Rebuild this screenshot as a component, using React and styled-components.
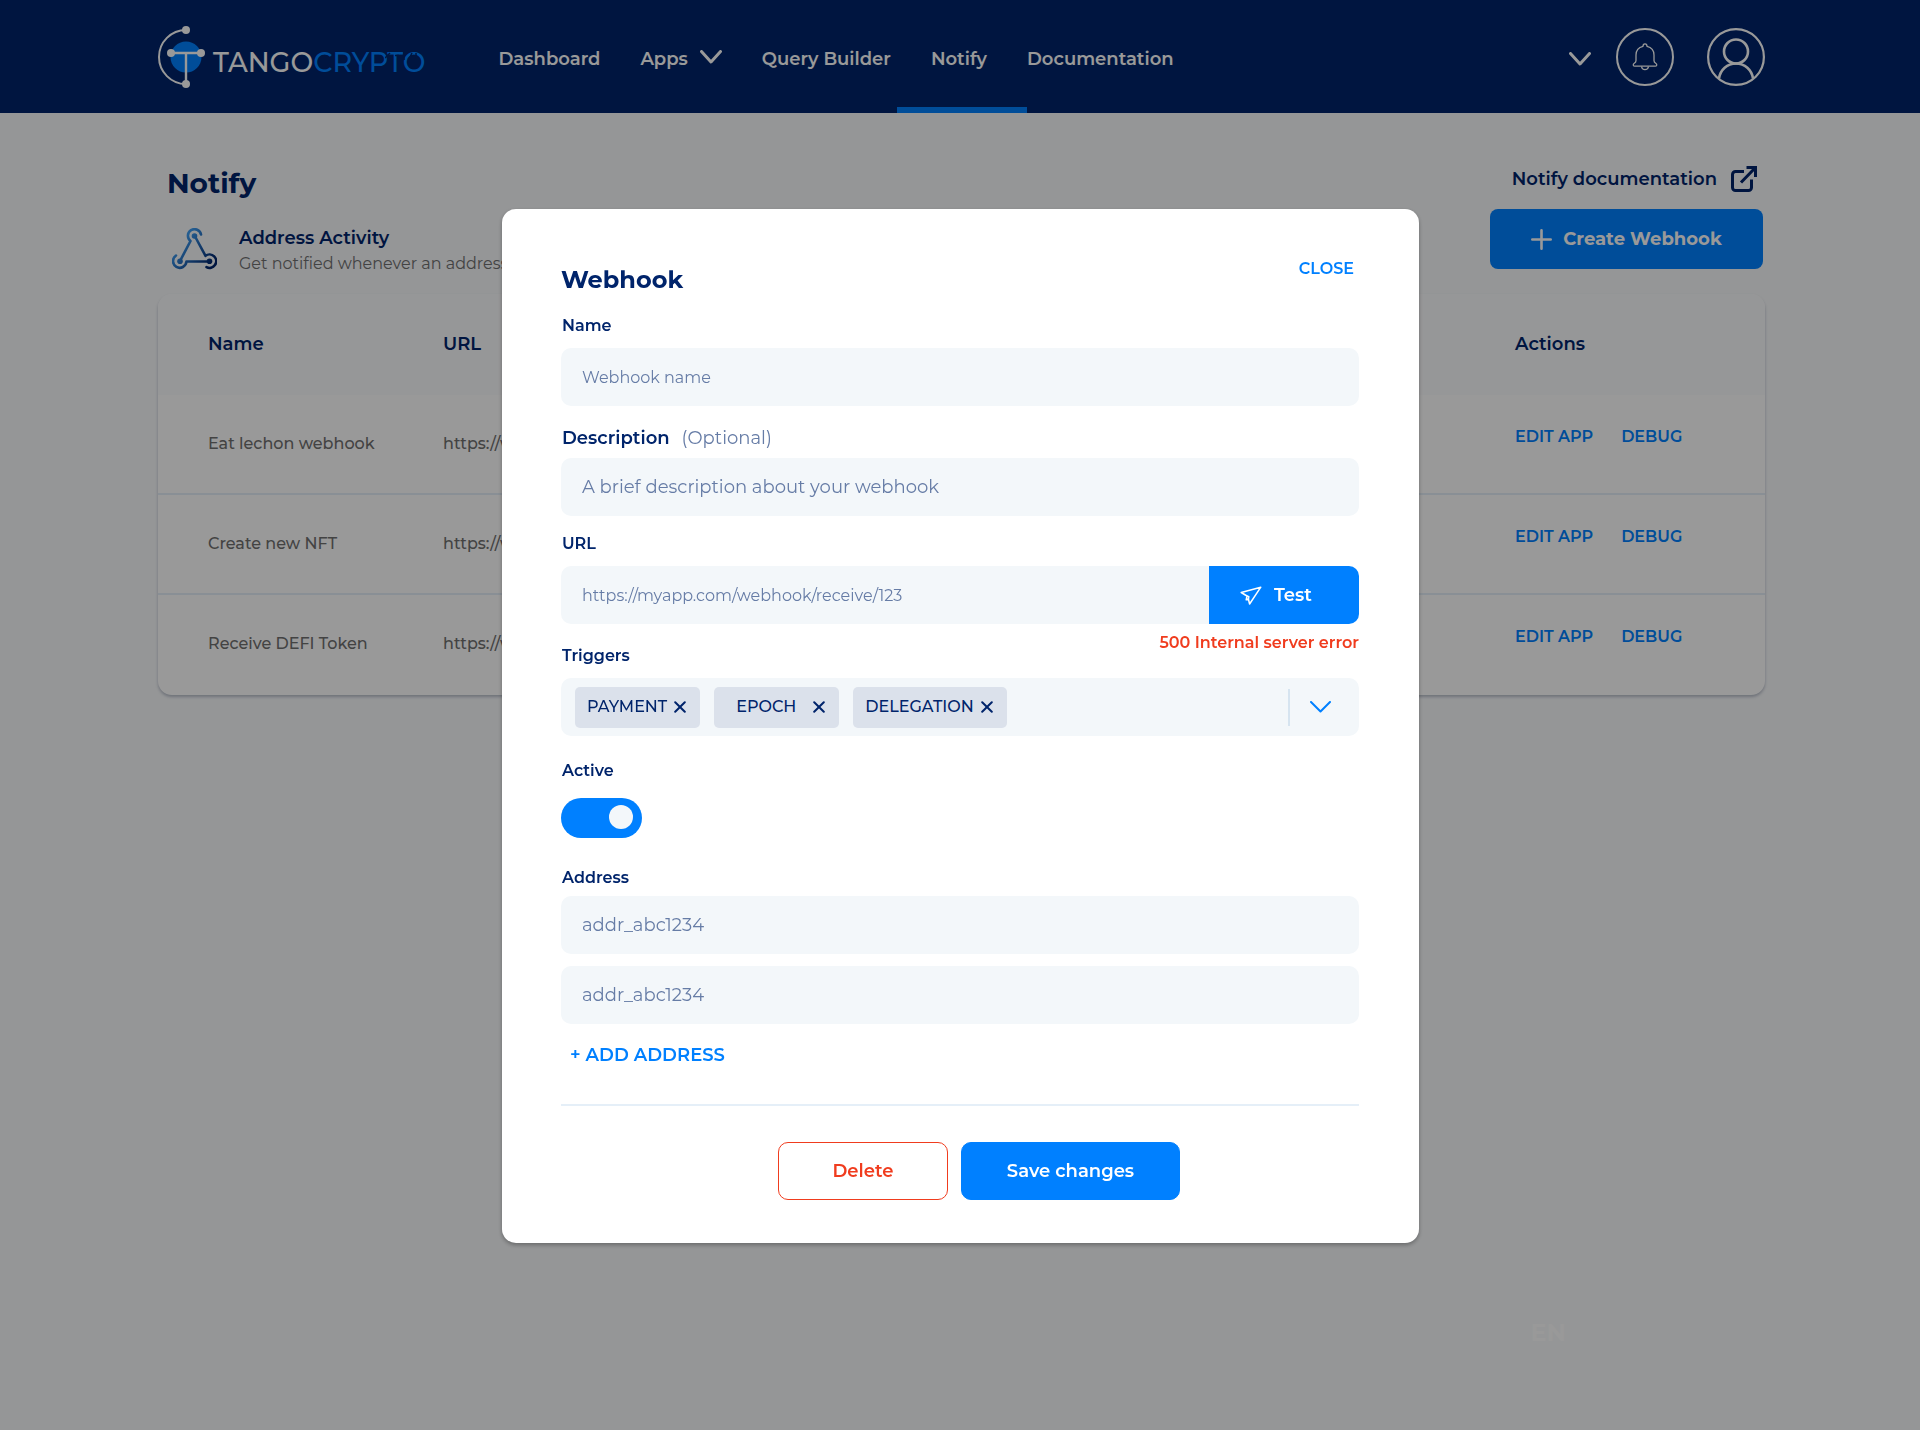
import React from "react";
import styled, { createGlobalStyle } from "styled-components";

const color = {
  navy: "#00246b",
  blue: "#0080ff",
  red: "#f03c1e",
  white: "#ffffff",
  page: "#f8fafc",
  tint: "#f3f7fa",
  muted: "#667ca6",
  body: "#707070",
  line: "#e5eff8",
  chip: "#dbe1eb",
};

const GlobalStyle = createGlobalStyle`
  *, *::before, *::after { box-sizing: border-box; }
  body {
    margin: 0;
    background: ${color.page};
    color: ${color.navy};
    font-family: Montserrat, Inter, sans-serif;
    font-size: 16px;
    line-height: 24px;
  }
  button, input { font: inherit; color: inherit; margin: 0; }
  button { border: 0; padding: 0; background: none; cursor: pointer; }
  a { color: inherit; text-decoration: none; }
  h1, h2, p { margin: 0; }
  svg { display: block; flex: none; }
`;

/* ---------- Page ---------- */

const Page = styled.div`
  min-height: 100vh;
  display: flex;
  flex-direction: column;
`;

const Header = styled.header`
  display: flex;
  align-items: center;
  height: 113px;
  padding: 0 155px 0 158px;
  background: ${color.navy};
  color: ${color.white};
`;

const Logo = styled.a`
  display: flex;
  align-items: center;
  gap: 7px;
  margin-right: 73px;
`;

const LogoText = styled.span`
  position: relative;
  padding-top: 12px;
  font-size: 27px;
  line-height: 32px;
  font-weight: 500;
`;

const LogoAccent = styled.span`
  color: ${color.blue};
`;

const LogoCuts = styled.svg`
  position: absolute;
  top: 17px;
  right: 4px;
`;

const Nav = styled.nav`
  display: flex;
  align-self: stretch;
  align-items: stretch;
  gap: 40px;
`;

const NavLink = styled.a`
  position: relative;
  display: flex;
  align-items: center;
  gap: 12px;
  padding-top: 4px;
  font-size: 18px;
  font-weight: 600;

  svg { margin-bottom: 4px; }

  &[aria-current]::after {
    content: "";
    position: absolute;
    left: -34px;
    right: -40px;
    bottom: 0;
    height: 6px;
    background: ${color.blue};
  }
`;

const HeaderTools = styled.div`
  display: flex;
  align-items: center;
  gap: 33px;
  margin-left: auto;
`;

const ToolGroup = styled.div`
  display: flex;
  align-items: center;
  gap: 25px;
`;

const MoreButton = styled.button`
  padding-top: 5px;
`;

const Main = styled.main`
  flex: 1;
  display: flex;
  flex-direction: column;
  padding: 52px 155px 0 158px;
`;

const Intro = styled.section`
  display: flex;
  justify-content: space-between;
  padding: 0 2px 17px 9px;
`;

const PageTitle = styled.h1`
  font-size: 28px;
  line-height: 36px;
  font-weight: 700;
`;

const Activity = styled.div`
  display: flex;
  align-items: center;
  gap: 22px;
  margin-top: 24px;
  padding-left: 5px;
`;

const ActivityTitle = styled.p`
  font-size: 18px;
  line-height: 26px;
  font-weight: 600;
`;

const ActivityText = styled.p`
  line-height: 26px;
  font-weight: 400;
  color: ${color.body};
`;

const IntroActions = styled.div`
  display: flex;
  flex-direction: column;
  align-items: flex-end;
  gap: 17px;
  padding-top: 1px;
`;

const DocLink = styled.a`
  display: flex;
  align-items: center;
  gap: 14px;
  margin-right: 6px;
  font-size: 18px;
  line-height: 26px;
  font-weight: 600;
`;

const CreateButton = styled.button`
  display: flex;
  align-items: center;
  justify-content: center;
  gap: 11px;
  width: 273px;
  height: 60px;
  border-radius: 8px;
  background: ${color.blue};
  color: ${color.white};
  font-size: 18px;
  font-weight: 700;
`;

const Card = styled.div`
  border-radius: 14px;
  overflow: hidden;
  background: ${color.white};
  box-shadow: 0 2px 3px rgba(0, 20, 60, 0.25);
`;

const Table = styled.table`
  width: 100%;
  border-collapse: separate;
  border-spacing: 0;
  table-layout: fixed;
`;

const HeadCell = styled.th`
  width: ${(p) => p.$width || "auto"};
  height: 101px;
  padding: 0 0 2px ${(p) => (p.$first ? "50px" : "0")};
  background: #fbfcfe;
  font-size: 18px;
  font-weight: 600;
  text-align: left;
`;

const Row = styled.tr`
  &:not(:last-child) td { border-bottom: 2px solid ${color.line}; }
`;

const Cell = styled.td`
  height: 100px;
  padding: 37px 0 0 ${(p) => (p.$first ? "50px" : "0")};
  vertical-align: top;
  white-space: nowrap;
  overflow: hidden;
  font-weight: 500;
  color: ${color.body};
`;

const ActionCell = styled(Cell)`
  padding-top: 30px;
`;

const RowActions = styled.div`
  display: flex;
  gap: 28px;
`;

const TextButton = styled.button`
  color: ${color.blue};
  font-size: ${(p) => (p.$large ? "18px" : "16px")};
  font-weight: 600;
`;

const PageFooter = styled.footer`
  display: flex;
  justify-content: flex-end;
  margin-top: auto;
  padding: 0 199px 81px 0;
`;

const LanguageButton = styled.button`
  font-size: 24px;
  line-height: 32px;
  font-weight: 700;
  color: ${color.white};
`;

/* ---------- Dialog ---------- */

const Overlay = styled.div`
  position: fixed;
  inset: 0;
  display: flex;
  justify-content: center;
  align-items: flex-start;
  padding: 209px 0 0 1px;
  overflow: auto;
  background: rgba(0, 0, 0, 0.4);
`;

const Dialog = styled.form`
  width: 100%;
  max-width: 917px;
  padding: 48px 60px 43px 59px;
  border-radius: 14px;
  background: ${color.white};
  box-shadow: 0 2px 4px rgba(0, 0, 0, 0.3);
`;

const DialogHead = styled.div`
  display: flex;
  justify-content: space-between;
  align-items: flex-start;
  padding-right: 5px;
`;

const DialogTitle = styled.h2`
  padding-top: 7px;
  font-size: 24px;
  line-height: 32px;
  font-weight: 700;
`;

const Field = styled.div`
  display: flex;
  flex-direction: column;
  align-items: stretch;
  gap: ${(p) => p.$gap || "10px"};
  margin-top: ${(p) => p.$top || "0"};
`;

const Label = styled.label`
  padding-left: 1px;
  font-size: ${(p) => (p.$large ? "18px" : "16px")};
  font-weight: 600;
`;

const Optional = styled.span`
  margin-left: 12px;
  font-weight: 400;
  color: ${color.muted};
`;

const TextInput = styled.input`
  width: 100%;
  height: 58px;
  padding: 0 21px;
  border: 0;
  border-radius: 10px;
  background: ${color.tint};
  font-size: ${(p) => (p.$large ? "18px" : "16px")};
  font-weight: 400;

  &::placeholder { color: ${color.muted}; opacity: 1; }
`;

const InputGroup = styled.div`
  display: flex;

  ${TextInput} { flex: 1; border-radius: 10px 0 0 10px; }
`;

const TestButton = styled.button`
  display: flex;
  align-items: center;
  gap: 12px;
  width: 150px;
  padding-left: 31px;
  border-radius: 0 10px 10px 0;
  background: ${color.blue};
  color: ${color.white};
  font-size: 18px;
  font-weight: 600;
`;

const LabelRow = styled.div`
  display: flex;
  justify-content: space-between;
  height: 37px;

  ${Label} { align-self: flex-end; }
`;

const ErrorText = styled.p`
  color: ${color.red};
  font-weight: 600;
`;

const TagBox = styled.div`
  display: flex;
  align-items: center;
  gap: 14px;
  height: 58px;
  padding-left: 14px;
  border-radius: 10px;
  background: ${color.tint};
`;

const Tag = styled.span`
  display: flex;
  align-items: center;
  gap: 7px;
  min-width: 125px;
  height: 41px;
  padding: 0 14px 0 12px;
  border-radius: 5px;
  background: ${color.chip};
  font-weight: 500;
`;

const TagName = styled.span`
  flex: 1;
  text-align: center;
`;

const MenuButton = styled.button`
  display: flex;
  align-items: center;
  width: 71px;
  height: 37px;
  margin-left: auto;
  padding-left: 20px;
  border-left: 2px solid #d6e4f0;
  color: ${color.blue};
`;

const Toggle = styled.input`
  appearance: none;
  display: flex;
  align-items: center;
  justify-content: flex-end;
  width: 81px;
  height: 40px;
  padding: 0 9px 2px;
  border-radius: 20px;
  background: ${color.blue};
  cursor: pointer;

  &::before {
    content: "";
    width: 24px;
    height: 24px;
    border-radius: 12px;
    background: ${color.tint};
  }

  &:not(:checked) {
    justify-content: flex-start;
    background: ${color.muted};
  }
`;

const AddressList = styled.div`
  display: flex;
  flex-direction: column;
  gap: 12px;
`;

const AddRow = styled.div`
  display: flex;
  padding: 19px 0 37px 9px;
  border-bottom: 2px solid ${color.line};
`;

const DialogFooter = styled.div`
  display: flex;
  justify-content: center;
  gap: 13px;
  padding: 36px 0 0 38px;
`;

const FooterButton = styled.button`
  width: ${(p) => (p.$danger ? "170px" : "219px")};
  height: 58px;
  border: 1px solid ${(p) => (p.$danger ? color.red : color.blue)};
  border-radius: 10px;
  background: ${(p) => (p.$danger ? color.white : color.blue)};
  color: ${(p) => (p.$danger ? color.red : color.white)};
  font-size: 18px;
  font-weight: 600;
`;

/* ---------- Drawings ---------- */

const Chevron = ({ width = 22, height = 14, stroke = 3 }) => (
  <svg width={width} height={height} viewBox={`0 0 ${width} ${height}`} fill="none" stroke="currentColor" strokeWidth={stroke} strokeLinecap="round" strokeLinejoin="round" aria-hidden="true">
    <path d={`M${stroke / 2} ${stroke / 2}L${width / 2} ${height - stroke / 2 - 0.5}L${width - stroke / 2} ${stroke / 2}`} />
  </svg>
);

const LogoMark = () => (
  <svg width="48" height="62" viewBox="0 0 48 62" fill="none" aria-hidden="true">
    <circle cx="28" cy="31" r="15.500" fill="#0080ff" />
    <path d="M28 4A27 27 0 0 0 28 58" stroke="#fff" strokeWidth="2" />
    <path d="M13 27H43M28 27V58" stroke="#fff" strokeWidth="2.400" />
    <g fill="#fff">
      <circle cx="28" cy="4" r="4" />
      <circle cx="28" cy="58" r="4" />
      <circle cx="13" cy="27" r="4" />
      <circle cx="43" cy="27" r="4" />
    </g>
  </svg>
);

const BellIcon = () => (
  <svg width="58" height="58" viewBox="0 0 58 58" fill="none" stroke="currentColor" strokeWidth="1.300" strokeLinejoin="round" aria-hidden="true">
    <circle cx="29" cy="29" r="28" strokeWidth="2" />
    <path d="M27 18.300c0-1.300.8-2.400 2-2.400s2 1.100 2 2.400c4.300 1 7 4.400 7 8.700v5.500c0 1.600.7 2.200 1.700 2.800 1.400.8 1.500 2.900-.2 2.900h-21c-1.700 0-1.600-2.100-.2-2.900 1-.6 1.700-1.200 1.700-2.800V27c0-4.300 2.700-7.700 7-8.700z" />
    <path d="M25.500 38.500c.3 2 1.700 3.200 3.500 3.200s3.200-1.200 3.500-3.200" />
  </svg>
);

const UserIcon = () => (
  <svg width="58" height="58" viewBox="0 0 58 58" fill="none" stroke="currentColor" strokeWidth="2.600" aria-hidden="true">
    <circle cx="29" cy="29" r="27.900" strokeWidth="2.200" />
    <circle cx="29" cy="23.500" r="12" />
    <path d="M12 50.500C13.200 41.800 20.200 35.500 29 35.500S44.800 41.800 46 50.500" />
  </svg>
);

const ExternalIcon = () => (
  <svg width="26" height="26" viewBox="0 0 26 26" fill="none" stroke="currentColor" strokeWidth="3" aria-hidden="true">
    <path d="M13 5.500H4.500a3 3 0 0 0-3 3v13a3 3 0 0 0 3 3H17.500a3 3 0 0 0 3-3V13.500" />
    <path d="M10 16.500L24 2M15.500 1.500H24.500V11" />
  </svg>
);

const PlusIcon = () => (
  <svg width="21" height="21" viewBox="0 0 21 21" stroke="currentColor" strokeWidth="2.600" strokeLinecap="round" aria-hidden="true">
    <path d="M10.500 1.300V19.700M1.300 10.500H19.700" />
  </svg>
);

const WebhookIcon = () => (
  <svg width="45" height="46" viewBox="0 0 45 46" fill="none" aria-hidden="true">
    <defs>
      <linearGradient id="hook" x1="4" y1="6" x2="40" y2="36" gradientUnits="userSpaceOnUse">
        <stop offset="0.200" stopColor="#3d9bf0" />
        <stop offset="1" stopColor="#00246b" />
      </linearGradient>
    </defs>
    <g stroke="url(#hook)" strokeWidth="2.600" strokeLinecap="round" strokeLinejoin="round">
      <path d="M29 6.500A6.600 6.600 0 1 0 18.500 13L8 33" />
      <path d="M22.500 7.500L33.500 27.800A6.700 6.700 0 1 1 34.500 39.200" />
      <path d="M4 27.500A6.700 6.700 0 1 0 14.400 33.500H37" />
    </g>
    <g fill="url(#hook)">
      <circle cx="22.500" cy="8" r="2.800" />
      <circle cx="8" cy="33.200" r="2.800" />
      <circle cx="37.500" cy="33.200" r="2.800" />
    </g>
  </svg>
);

const PlaneIcon = () => (
  <svg width="22" height="20" viewBox="0 0 22 20" fill="none" stroke="currentColor" strokeWidth="1.500" strokeLinejoin="round" aria-hidden="true">
    <path d="M1.200 7.500L20.800 2.200L9.600 19L8.400 14L6.200 14.800L7 11Z" />
    <path d="M7 11L8.800 11.800L8.400 14" />
  </svg>
);

const CrossIcon = () => (
  <svg width="12" height="12" viewBox="0 0 12 12" stroke="currentColor" strokeWidth="2" strokeLinecap="round" aria-hidden="true">
    <path d="M1.200 1.200L10.800 10.800M10.800 1.200L1.200 10.800" />
  </svg>
);

/* ---------- Data ---------- */

const links = ["Dashboard", "Apps", "Query Builder", "Notify", "Documentation"];
const webhooks = ["Eat lechon webhook", "Create new NFT", "Receive DEFI Token"];
const triggers = ["PAYMENT", "EPOCH", "DELEGATION"];

export default function App() {
  return (
    <Page>
      <GlobalStyle />
      <Header>
        <Logo href="#" aria-label="Tangocrypto">
          <LogoMark />
          <LogoText>
            TANGO<LogoAccent>CRYPTO</LogoAccent>
            <LogoCuts width="36" height="8" viewBox="0 0 36 8" stroke={color.navy} strokeWidth="1.500" aria-hidden="true">
              <path d="M0 6L5 1M10 3.500H14M19 0V8M24 7L27 1M31 1V7" />
            </LogoCuts>
          </LogoText>
        </Logo>
        <Nav>
          {links.map((name) => (
            <NavLink key={name} href="#" aria-current={name === "Notify" ? "page" : undefined}>
              {name}
              {name === "Apps" && <Chevron />}
            </NavLink>
          ))}
        </Nav>
        <HeaderTools>
          <ToolGroup>
            <MoreButton type="button" aria-label="More"><Chevron /></MoreButton>
            <button type="button" aria-label="Notifications"><BellIcon /></button>
          </ToolGroup>
          <button type="button" aria-label="Account"><UserIcon /></button>
        </HeaderTools>
      </Header>

      <Main>
        <Intro>
          <div>
            <PageTitle>Notify</PageTitle>
            <Activity>
              <WebhookIcon />
              <div>
                <ActivityTitle>Address Activity</ActivityTitle>
                <ActivityText>Get notified whenever an address</ActivityText>
              </div>
            </Activity>
          </div>
          <IntroActions>
            <DocLink href="#">
              Notify documentation
              <ExternalIcon />
            </DocLink>
            <CreateButton type="button">
              <PlusIcon />
              Create Webhook
            </CreateButton>
          </IntroActions>
        </Intro>

        <Card>
          <Table>
            <thead>
              <tr>
                <HeadCell $first $width="285px">Name</HeadCell>
                <HeadCell>URL</HeadCell>
                <HeadCell $width="250px">Actions</HeadCell>
              </tr>
            </thead>
            <tbody>
              {webhooks.map((name) => (
                <Row key={name}>
                  <Cell $first>{name}</Cell>
                  <Cell>https://wh.io</Cell>
                  <ActionCell>
                    <RowActions>
                      <TextButton type="button">EDIT APP</TextButton>
                      <TextButton type="button">DEBUG</TextButton>
                    </RowActions>
                  </ActionCell>
                </Row>
              ))}
            </tbody>
          </Table>
        </Card>

        <PageFooter>
          <LanguageButton type="button">EN</LanguageButton>
        </PageFooter>
      </Main>

      <Overlay>
        <Dialog role="dialog" aria-modal="true" aria-labelledby="dialog-title" onSubmit={(e) => e.preventDefault()}>
          <DialogHead>
            <DialogTitle id="dialog-title">Webhook</DialogTitle>
            <TextButton type="button">CLOSE</TextButton>
          </DialogHead>

          <Field $top="18px">
            <Label htmlFor="name">Name</Label>
            <TextInput id="name" placeholder="Webhook name" />
          </Field>

          <Field $top="20px" $gap="8px">
            <Label htmlFor="description" $large>
              Description<Optional>(Optional)</Optional>
            </Label>
            <TextInput id="description" $large placeholder="A brief description about your webhook" />
          </Field>

          <Field $top="16px">
            <Label htmlFor="url">URL</Label>
            <InputGroup>
              <TextInput id="url" type="url" placeholder="https://myapp.com/webhook/receive/123" aria-describedby="url-error" />
              <TestButton type="button">
                <PlaneIcon />
                Test
              </TestButton>
            </InputGroup>
          </Field>

          <Field $top="7px">
            <LabelRow>
              <Label as="span" id="triggers-label">Triggers</Label>
              <ErrorText id="url-error">500 Internal server error</ErrorText>
            </LabelRow>
            <TagBox role="group" aria-labelledby="triggers-label">
              {triggers.map((name) => (
                <Tag key={name}>
                  <TagName>{name}</TagName>
                  <button type="button" aria-label={`Remove ${name}`}><CrossIcon /></button>
                </Tag>
              ))}
              <MenuButton type="button" aria-label="Choose triggers" aria-haspopup="listbox">
                <Chevron width={21} height={12} stroke={2} />
              </MenuButton>
            </TagBox>
          </Field>

          <Field $top="23px" $gap="15px">
            <Label htmlFor="active">Active</Label>
            <Toggle id="active" type="checkbox" defaultChecked />
          </Field>

          <Field $top="28px" $gap="6px">
            <Label htmlFor="address-1">Address</Label>
            <AddressList>
              <TextInput id="address-1" $large placeholder="addr_abc1234" />
              <TextInput id="address-2" $large placeholder="addr_abc1234" aria-label="Address 2" />
            </AddressList>
          </Field>

          <AddRow>
            <TextButton type="button" $large>+ ADD ADDRESS</TextButton>
          </AddRow>

          <DialogFooter>
            <FooterButton type="button" $danger>Delete</FooterButton>
            <FooterButton type="submit">Save changes</FooterButton>
          </DialogFooter>
        </Dialog>
      </Overlay>
    </Page>
  );
}
